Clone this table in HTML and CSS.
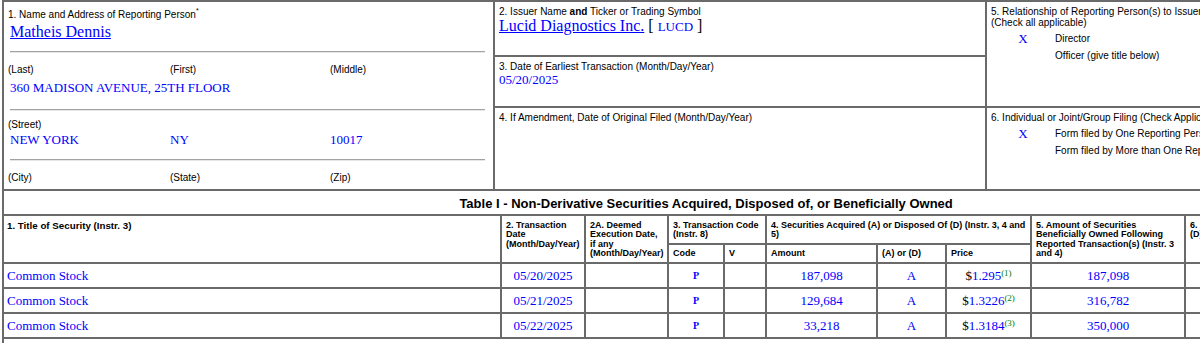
FILE: index.html
```html
<!DOCTYPE html>
<html>
<head>
<meta charset="utf-8">
<title>Form 4</title>
<link rel="stylesheet" href="styles.css">
</head>
<body>
<div class="page">
  <div class="topbox">
    <div class="cell c1">
      <div class="lbl title1">1. Name and Address of Reporting Person<sup class="ast">*</sup></div>
      <div class="name data"><a href="#">Matheis Dennis</a></div>
      <div class="rule r1"></div>
      <div class="trio lbl labels1"><span>(Last)</span><span>(First)</span><span>(Middle)</span></div>
      <div class="data addr">360 MADISON AVENUE, 25TH FLOOR</div>
      <div class="rule r2"></div>
      <div class="lbl street">(Street)</div>
      <div class="trio data city"><span>NEW YORK</span><span>NY</span><span>10017</span></div>
      <div class="rule r3"></div>
      <div class="trio lbl labels3"><span>(City)</span><span>(State)</span><span>(Zip)</span></div>
    </div>
    <div class="cell c2a bb">
      <div class="lbl">2. Issuer Name <b>and</b> Ticker or Trading Symbol</div>
      <div class="issuer"><a href="#">Lucid Diagnostics Inc.</a> [ <span class="ticker">LUCD</span> ]</div>
    </div>
    <div class="cell c2b bb">
      <div class="lbl">3. Date of Earliest Transaction (Month/Day/Year)</div>
      <div class="data">05/20/2025</div>
    </div>
    <div class="cell c2c">
      <div class="lbl">4. If Amendment, Date of Original Filed (Month/Day/Year)</div>
    </div>
    <div class="cell c3a bb">
      <div class="lbl">5. Relationship of Reporting Person(s) to Issuer<br>(Check all applicable)</div>
      <div class="checks">
        <div class="chk"><span class="x">X</span><span class="lbl">Director</span></div>
        <div class="chk"><span class="x"></span><span class="lbl">Officer (give title below)</span></div>
      </div>
    </div>
    <div class="cell c3b">
      <div class="lbl">6. Individual or Joint/Group Filing (Check Applicable Line)</div>
      <div class="checks checks6">
        <div class="chk"><span class="x">X</span><span class="lbl">Form filed by One Reporting Person</span></div>
        <div class="chk"><span class="x"></span><span class="lbl">Form filed by More than One Reporting Person</span></div>
      </div>
    </div>
  </div>

  <table class="t1">
    <colgroup>
      <col class="w1"><col class="w2"><col class="w3"><col class="w4"><col class="w5"><col class="w6"><col class="w7"><col class="w8"><col class="w9"><col class="w10"><col class="w11">
    </colgroup>
    <thead>
      <tr><th colspan="11" class="ttl">Table I - Non-Derivative Securities Acquired, Disposed of, or Beneficially Owned</th></tr>
      <tr class="hrow1">
        <th rowspan="2" class="med">1. Title of Security (Instr. 3)</th>
        <th rowspan="2">2. Transaction Date (Month/Day/Year)</th>
        <th rowspan="2">2A. Deemed Execution Date, if any (Month/Day/Year)</th>
        <th colspan="2">3. Transaction Code (Instr. 8)</th>
        <th colspan="3">4. Securities Acquired (A) or Disposed Of (D) (Instr. 3, 4 and 5)</th>
        <th rowspan="2">5. Amount of Securities Beneficially Owned Following Reported Transaction(s) (Instr. 3 and 4)</th>
        <th rowspan="2">6. Ownership Form: Direct (D) or Indirect (I) (Instr. 4)</th>
        <th rowspan="2">7. Nature of Indirect Beneficial Ownership (Instr. 4)</th>
      </tr>
      <tr class="hrow2"><th>Code</th><th>V</th><th>Amount</th><th>(A) or (D)</th><th>Price</th></tr>
    </thead>
    <tbody>
      <tr>
        <td class="left">Common Stock</td><td>05/20/2025</td><td></td><td class="code">P</td><td></td>
        <td>187,098</td><td>A</td><td><span class="usd">$</span>1.295<span class="fn">(1)</span></td><td>187,098</td><td>D</td><td></td>
      </tr>
      <tr>
        <td class="left">Common Stock</td><td>05/21/2025</td><td></td><td class="code">P</td><td></td>
        <td>129,684</td><td>A</td><td><span class="usd">$</span>1.3226<span class="fn">(2)</span></td><td>316,782</td><td>D</td><td></td>
      </tr>
      <tr>
        <td class="left">Common Stock</td><td>05/22/2025</td><td></td><td class="code">P</td><td></td>
        <td>33,218</td><td>A</td><td><span class="usd">$</span>1.3184<span class="fn">(3)</span></td><td>350,000</td><td>D</td><td></td>
      </tr>
    </tbody>
  </table>
  <div class="after"></div>
</div>
</body>
</html>
```
FILE: styles.css
```css
html, body {
  margin: 0;
  padding: 0;
  background: #fff;
  overflow: hidden;
}
body {
  font-family: "Liberation Sans", Arial, sans-serif;
  font-size: 10px;
  color: #000;
}
a { color: #0000ff; }
.page {
  width: 1408px;
  margin-left: 2px;
}
.lbl {
  font-family: "Liberation Sans", Arial, sans-serif;
  font-size: 10px;
  color: #000;
}
.data {
  font-family: "Liberation Serif", "Times New Roman", serif;
  font-size: 13px;
  color: #0000ff;
}

/* ---------- top box ---------- */
.topbox {
  display: grid;
  grid-template-columns: 491px 492px 1fr;
  grid-template-rows: 55px 51px 81px;
  border-left: 2px solid #6a6a6a;
  border-top: 2px solid #6a6a6a;
}
.cell {
  border-right: 2px solid #6a6a6a;
  padding: 4px;
  box-sizing: border-box;
  overflow: hidden;
}
.bb { border-bottom: 2px solid #6a6a6a; }
.c1 { grid-column: 1; grid-row: 1 / 4; }
.c2a { grid-column: 2; grid-row: 1; }
.c2b { grid-column: 2; grid-row: 2; }
.c2c { grid-column: 2; grid-row: 3; }
.c3a { grid-column: 3; grid-row: 1 / 3; }
.c3b { grid-column: 3; grid-row: 3; }

.title1 { line-height: 17px; }
.ast { font-size: 7px; vertical-align: 5px; line-height: 0; }
.name {
  font-size: 16px;
  line-height: 18px;
  padding-left: 2px;
}
.rule {
  border-top: 1px solid #a3a3a3;
  border-bottom: 1px solid #e6e6e6;
  margin-left: 2px;
  margin-right: 4px;
}
.r1 { margin-top: 10px; }
.r2 { margin-top: 13px; }
.r3 { margin-top: 11px; }
.trio {
  display: grid;
  grid-template-columns: 162px 160px 1fr;
}
.labels1 { margin-top: 11px; line-height: 12px; }
.addr { padding-top: 4px; line-height: 16px; padding-left: 2px; }
.street { margin-top: 8px; line-height: 12px; }
.city {
  margin-top: 1px;
  line-height: 16px;
  padding-left: 2px;
  grid-template-columns: 160px 160px 1fr;
}
.labels3 { margin-top: 11px; line-height: 12px; }

.issuer {
  font-family: "Liberation Serif", "Times New Roman", serif;
  font-size: 16px;
  line-height: 18px;
  color: #000;
}
.ticker {
  font-size: 13px;
  color: #0000ff;
}

.checks { margin-top: 2px; }
.checks6 { margin-top: 2px; }
.chk {
  display: grid;
  grid-template-columns: 64px 1fr;
  align-items: center;
  height: 17px;
  white-space: nowrap;
}
.x {
  font-family: "Liberation Serif", "Times New Roman", serif;
  font-size: 13px;
  color: #0000ff;
  text-align: center;
}

/* ---------- Table I ---------- */
.t1 {
  width: 1408px;
  table-layout: fixed;
  border-collapse: separate;
  border-spacing: 0;
  border-left: 2px solid #6a6a6a;
  border-top: 2px solid #6a6a6a;
}
.w1 { width: 498px; }
.w2 { width: 84px; }
.w3 { width: 83px; }
.w4 { width: 56px; }
.w5 { width: 42px; }
.w6 { width: 111px; }
.w7 { width: 69px; }
.w8 { width: 85px; }
.w9 { width: 154px; }
.w10 { width: 130px; }
.w11 { width: 94px; }

.t1 th, .t1 td {
  border-right: 2px solid #6a6a6a;
  border-bottom: 2px solid #6a6a6a;
  padding: 4px;
  overflow: hidden;
}
.t1 th {
  font-family: "Liberation Sans", Arial, sans-serif;
  font-size: 9px;
  line-height: 9.4px;
  font-weight: bold;
  text-align: left;
  vertical-align: top;
  padding-right: 2px;
}
.t1 th.med {
  font-size: 9.75px;
  padding-left: 3px;
}
.t1 th.ttl {
  font-size: 13px;
  line-height: 15px;
  text-align: center;
  vertical-align: middle;
  padding: 5px 4px 3px;
}
.t1 .hrow1 th { padding-top: 5px; padding-bottom: 3px; }
.t1 td {
  font-family: "Liberation Serif", "Times New Roman", serif;
  font-size: 13px;
  line-height: 15px;
  color: #0000ff;
  text-align: center;
  vertical-align: middle;
  white-space: nowrap;
}
.t1 td.left { text-align: left; padding-left: 3px; }
.t1 td.code {
  font-size: 10px;
  font-weight: bold;
}
.usd { color: #000; }
.fn {
  color: #008000;
  font-size: 9px;
  vertical-align: 4px;
  line-height: 0;
}
.after {
  height: 10px;
  border-left: 2px solid #6a6a6a;
}
```
